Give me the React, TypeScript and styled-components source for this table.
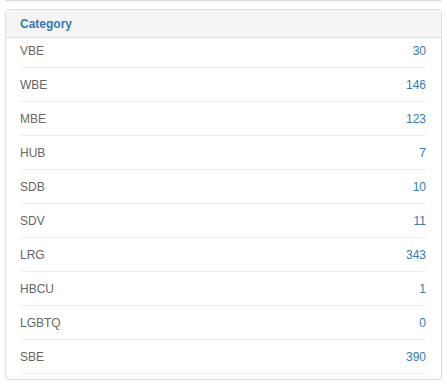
import styled, { createGlobalStyle } from "styled-components";

const rows: { name: string; count: number }[] = [
  { name: "VBE", count: 30 },
  { name: "WBE", count: 146 },
  { name: "MBE", count: 123 },
  { name: "HUB", count: 7 },
  { name: "SDB", count: 10 },
  { name: "SDV", count: 11 },
  { name: "LRG", count: 343 },
  { name: "HBCU", count: 1 },
  { name: "LGBTQ", count: 0 },
  { name: "SBE", count: 390 },
];

const App = () => {
  return (
    <Page>
      <Global />
      <PrevPanel />
      <Panel>
        <Heading>Category</Heading>
        <Body>
          {rows.map((r) => (
            <Row key={r.name}>
              <Name>{r.name}</Name>
              <Count href="#">{r.count}</Count>
            </Row>
          ))}
        </Body>
      </Panel>
    </Page>
  );
};

export default App;

const Global = createGlobalStyle`
  body {
    margin: 0;
    background: #fff;
    font-family: "Liberation Sans", Arial, sans-serif;
    font-size: 13px;
    color: #555;
  }
`;

const Page = styled.div`
  padding: 0 5px 0 5px;
  width: 437px;
`;

const PrevPanel = styled.div`
  height: 1px;
  margin-top: -1px;
  border: 1px solid #ddd;
  border-top: none;
  border-radius: 0 0 4px 4px;
  box-shadow: 0 1px 1px rgba(0, 0, 0, 0.05);
  margin-bottom: 8px;
`;

const Panel = styled.div`
  border: 1px solid #ddd;
  border-radius: 4px;
  box-shadow: 0 1px 1px rgba(0, 0, 0, 0.05);
  background: #fff;
`;

const Heading = styled.div`
  background: #f5f5f5;
  border-bottom: 1px solid #ddd;
  border-radius: 3px 3px 0 0;
  padding: 6px 14px 5px;
  height: 16px;
  line-height: 16px;
  font-size: 12px;
  font-weight: bold;
  color: #337ab7;
`;

const Body = styled.div`
  padding: 0 15px 5px 14px;
  margin-top: -4px;
`;

const Row = styled.div`
  display: flex;
  justify-content: space-between;
  align-items: center;
  height: 33px;
  border-bottom: 1px solid #eee;
  line-height: 18px;
  font-size: 12px;
`;

const Name = styled.span`
  color: #666;
`;

const Count = styled.a`
  color: #337ab7;
  text-decoration: none;
`;
